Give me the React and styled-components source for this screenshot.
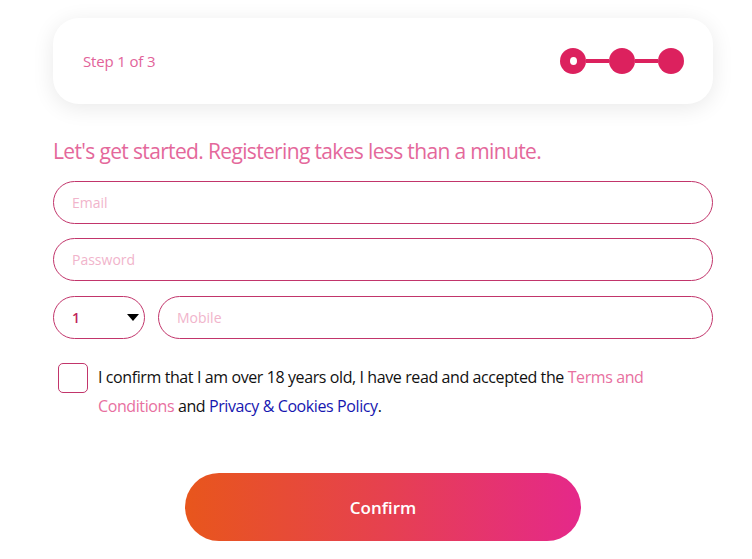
import React, { useState } from "react";
import styled, { createGlobalStyle } from "styled-components";

const GlobalStyle = createGlobalStyle`
  body {
    margin: 0;
    background: #fff;
    font-family: "Open Sans", "Liberation Sans", sans-serif;
  }
  * { box-sizing: border-box; }
`;

const steps = [1, 2, 3];

const App = () => {
  const [agreed, setAgreed] = useState(false);

  return (
    <Page>
      <GlobalStyle />
      <StepCard>
        <StepLabel>Step 1 of 3</StepLabel>
        <Stepper>
          {steps.map((step, index) => (
            <React.Fragment key={step}>
              {index > 0 && <StepLine />}
              <StepDot $current={index === 0} />
            </React.Fragment>
          ))}
        </Stepper>
      </StepCard>

      <Heading>Let's get started. Registering takes less than a minute.</Heading>

      <Form onSubmit={(e) => e.preventDefault()}>
        <Input type="email" placeholder="Email" />
        <Input type="password" placeholder="Password" />
        <PhoneRow>
          <SelectWrap>
            <CodeSelect defaultValue="1">
              <option value="1">1</option>
              <option value="44">44</option>
              <option value="61">61</option>
            </CodeSelect>
            <Caret />
          </SelectWrap>
          <Input type="tel" placeholder="Mobile" />
        </PhoneRow>

        <ConsentRow>
          <Checkbox
            type="checkbox"
            checked={agreed}
            onChange={() => setAgreed(!agreed)}
          />
          <ConsentText>
            I confirm that I am over 18 years old, I have read and accepted the{" "}
            <TermsLink href="#">Terms and Conditions</TermsLink> and{" "}
            <PolicyLink href="#">Privacy &amp; Cookies Policy</PolicyLink>.
          </ConsentText>
        </ConsentRow>

        <ButtonRow>
          <ConfirmButton type="submit">Confirm</ConfirmButton>
        </ButtonRow>
      </Form>
    </Page>
  );
};

const Page = styled.div`
  width: 713px;
  padding: 18px 0 0 53px;
`;

const StepCard = styled.div`
  height: 86px;
  background: #fff;
  border-radius: 26px;
  box-shadow: 0 4px 22px rgba(0, 0, 0, 0.09);
  display: flex;
  align-items: center;
  justify-content: space-between;
  padding: 0 29px 0 30px;
`;

const StepLabel = styled.span`
  font-size: 15px;
  color: #e2639a;
  letter-spacing: -0.15px;
`;

const Stepper = styled.div`
  display: flex;
  align-items: center;
`;

const StepDot = styled.span`
  width: 26px;
  height: 26px;
  border-radius: 50%;
  background: #dc215e;
  display: grid;
  place-items: center;

  &::after {
    content: "";
    display: ${(p) => (p.$current ? "block" : "none")};
    width: 7px;
    height: 8px;
    border-radius: 50%;
    background: #fff;
  }
`;

const StepLine = styled.span`
  width: 23px;
  height: 4px;
  background: #dc215e;
`;

const Heading = styled.h2`
  margin: 33px 0 16px;
  font-size: 21px;
  font-weight: 400;
  color: #e4689b;
  letter-spacing: -0.65px;
  line-height: 28px;
`;

const Form = styled.form`
  display: flex;
  flex-direction: column;
  gap: 14px;
`;

const Input = styled.input`
  flex: none;
  width: 100%;
  height: 43px;
  border: 1px solid #c2356b;
  border-radius: 22px;
  padding: 0 18px;
  font-family: inherit;
  font-size: 14px;
  color: #333;
  outline: none;

  &::placeholder {
    color: #f1b4cb;
  }
`;

const PhoneRow = styled.div`
  display: flex;
  gap: 13px;
  margin-top: 1px;

  ${Input} {
    flex: 1;
    min-width: 0;
  }
`;

const SelectWrap = styled.div`
  position: relative;
  width: 92px;
  flex: none;
`;

const CodeSelect = styled.select`
  appearance: none;
  width: 100%;
  height: 43px;
  border: 1px solid #c2356b;
  border-radius: 22px;
  background: #fff;
  padding: 0 18px;
  font-family: inherit;
  font-size: 14px;
  font-weight: 600;
  color: #c0245c;
  outline: none;
`;

const Caret = styled.span`
  position: absolute;
  right: 6px;
  top: 18px;
  width: 0;
  height: 0;
  border-left: 6px solid transparent;
  border-right: 6px solid transparent;
  border-top: 7px solid #000;
  pointer-events: none;
`;

const ConsentRow = styled.div`
  display: flex;
  align-items: flex-start;
  gap: 10px;
  padding: 0 20px 0 5px;
  margin-top: 10px;
`;

const Checkbox = styled.input`
  appearance: none;
  flex: none;
  width: 30px;
  height: 30px;
  margin: 0;
  border: 1px solid #c2356b;
  border-radius: 5px;
  background: #fff;
  cursor: pointer;

  &:checked {
    background: #dc215e;
  }
`;

const ConsentText = styled.p`
  margin: 0;
  font-size: 16px;
  line-height: 29px;
  color: #111;
  letter-spacing: -0.4px;
`;

const TermsLink = styled.a`
  color: #e8709f;
  text-decoration: none;
`;

const PolicyLink = styled.a`
  color: #1616b0;
  text-decoration: none;
`;

const ButtonRow = styled.div`
  display: flex;
  padding-left: 132px;
  margin-top: 38px;
`;

const ConfirmButton = styled.button`
  width: 396px;
  height: 68px;
  border: none;
  border-radius: 34px;
  background: linear-gradient(90deg, #e8561c 0%, #e6414f 50%, #e5288a 100%);
  color: #fff;
  font-family: inherit;
  font-size: 17px;
  font-weight: 600;
  cursor: pointer;
`;

export default App;
